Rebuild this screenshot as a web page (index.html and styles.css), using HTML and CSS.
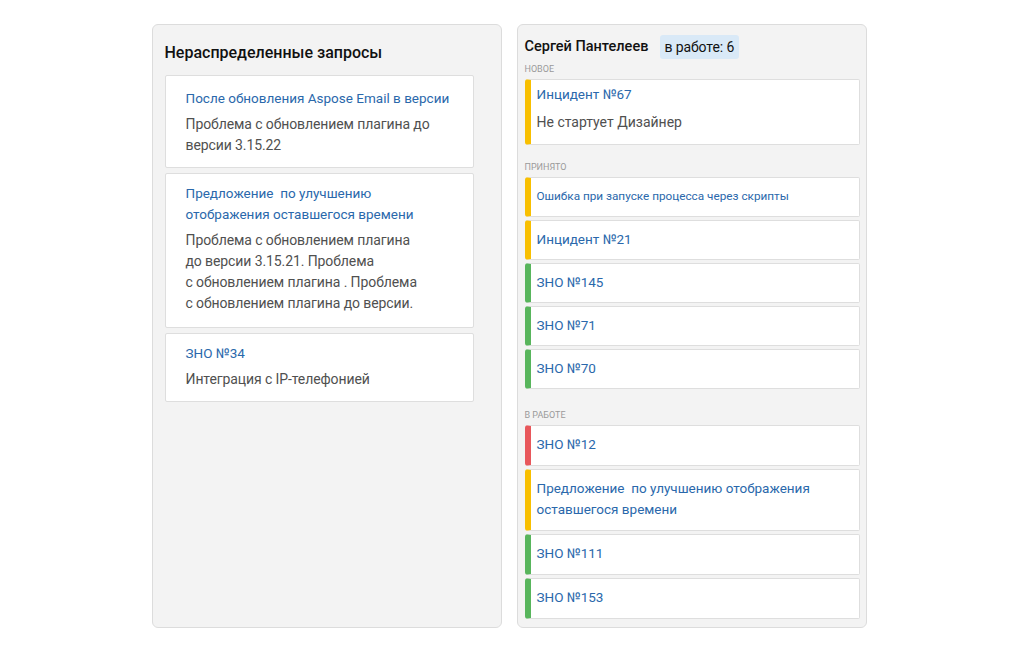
FILE: index.html
```html
<!DOCTYPE html>
<html lang="ru">
<head>
<meta charset="utf-8">
<title>Запросы</title>
<link rel="stylesheet" href="styles.css">
</head>
<body>
<div class="board">
  <section class="panel panel--left">
    <h2 class="panel-title">Нераспределенные запросы</h2>
    <div class="list">
      <div class="req req--first">
        <div class="req-title">После обновления Aspose Email в версии</div>
        <div class="req-desc">Проблема с обновлением плагина до версии 3.15.22</div>
      </div>
      <div class="req req--tall">
        <div class="req-title">Предложение&nbsp; по улучшению<br>отображения оставшегося времени</div>
        <div class="req-desc">Проблема с обновлением плагина<br>до версии 3.15.21. Проблема<br>с обновлением плагина . Проблема<br>с обновлением плагина до версии.</div>
      </div>
      <div class="req">
        <div class="req-title">ЗНО №34</div>
        <div class="req-desc">Интеграция с IP-телефонией</div>
      </div>
    </div>
  </section>

  <section class="panel panel--right">
    <div class="user-head">
      <h2 class="user-name">Сергей Пантелеев</h2>
      <span class="badge">в работе: 6</span>
    </div>

    <div class="group">
      <div class="group-label">Новое</div>
      <div class="task task--yellow task--desc">
        <div class="task-title">Инцидент №67</div>
        <div class="task-desc">Не стартует Дизайнер</div>
      </div>
    </div>

    <div class="group group--accepted">
      <div class="group-label">Принято</div>
      <div class="task task--yellow"><div class="task-title task-title--small">Ошибка при запуске процесса через скрипты</div></div>
      <div class="task task--yellow"><div class="task-title">Инцидент №21</div></div>
      <div class="task task--green"><div class="task-title">ЗНО №145</div></div>
      <div class="task task--green"><div class="task-title">ЗНО №71</div></div>
      <div class="task task--green"><div class="task-title">ЗНО №70</div></div>
    </div>

    <div class="group group--work">
      <div class="group-label">В работе</div>
      <div class="task task--red"><div class="task-title">ЗНО №12</div></div>
      <div class="task task--yellow"><div class="task-title">Предложение&nbsp; по улучшению отображения оставшегося времени</div></div>
      <div class="task task--green"><div class="task-title">ЗНО №111</div></div>
      <div class="task task--green"><div class="task-title">ЗНО №153</div></div>
    </div>
  </section>
</div>
</body>
</html>
```

FILE: styles.css
```css
* { box-sizing: border-box; }

body {
  margin: 0;
  background: #ffffff;
  font-family: Roboto, "Noto Sans", "DejaVu Sans", sans-serif;
  color: #111;
}

.board {
  display: flex;
  justify-content: center;
  gap: 15px;
  padding-top: 24px;
}

.panel {
  width: 350px;
  height: 604px;
  background: #f3f3f3;
  border: 1px solid #dcdcdc;
  border-radius: 6px;
}

.panel--left {
  padding: 17px 27px 0 12px;
}

.panel-title {
  margin: 0 0 11px;
  font-size: 16px;
  line-height: 22px;
  font-weight: 500;
  color: #111;
}

.list {
  display: flex;
  flex-direction: column;
  gap: 5px;
}

.req {
  background: #fff;
  border: 1px solid #dedede;
  border-radius: 2px;
  padding: 9px 20px 11px;
}

.req--first { padding-top: 12px; padding-bottom: 11px; }
.req--tall { padding-bottom: 13px; }

.req-title {
  font-size: 13.5px;
  line-height: 21px;
  color: #2a68ab;
}

.req-desc {
  margin-top: 5px;
  font-size: 14px;
  line-height: 21px;
  letter-spacing: -0.1px;
  color: #505050;
}

.panel--right {
  padding: 10px 6px 0 7px;
}

.user-head {
  display: flex;
  align-items: center;
  gap: 12px;
}

.user-name {
  margin: 0;
  font-size: 14.5px;
  line-height: 24px;
  font-weight: 500;
  color: #111;
}

.badge {
  background: #d9e9f7;
  border-radius: 3px;
  padding: 0 5px 0 4px;
  height: 24px;
  line-height: 24px;
  font-size: 14px;
  letter-spacing: -0.1px;
  color: #111;
}

.group {
  display: flex;
  flex-direction: column;
  gap: 3px;
}

.group-label {
  margin-top: 4px;
  margin-bottom: 1px;
  font-size: 9px;
  line-height: 12px;
  text-transform: uppercase;
  color: #9a9a9a;
}

.group--accepted { margin-top: 12px; }
.group--work { margin-top: 16px; }

.task {
  background: #fff;
  border: 1px solid #dedede;
  border-left: 6px solid #f8bf00;
  border-radius: 3px 2px 2px 3px;
  padding: 8px 10px 9px 6px;
}

.task--yellow { border-left-color: #f8bf00; }
.task--green { border-left-color: #58b55c; }
.task--red { border-left-color: #e8575b; }

.task--desc { padding-top: 4px; padding-bottom: 12px; }

.group--work .task { padding-bottom: 10px; }

.task-title {
  font-size: 13.5px;
  line-height: 21px;
  color: #2a68ab;
}

.task-title--small { font-size: 11.75px; }

.task-desc {
  margin-top: 7px;
  font-size: 14px;
  line-height: 20px;
  color: #505050;
}
```
